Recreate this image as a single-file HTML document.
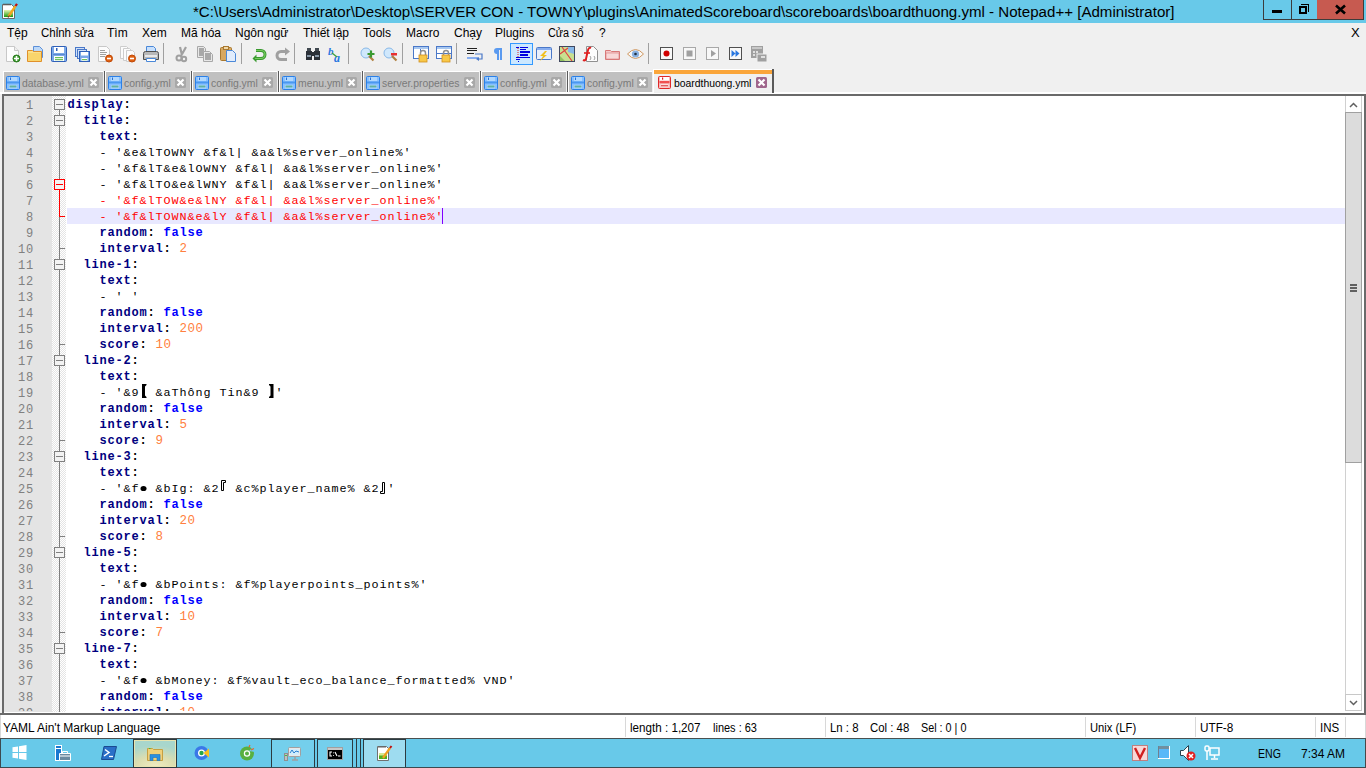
<!DOCTYPE html>
<html><head><meta charset="utf-8"><style>
*{margin:0;padding:0;box-sizing:border-box}
html,body{width:1366px;height:768px;overflow:hidden;background:#f0f0f0;position:relative;font-family:"Liberation Sans",sans-serif}
.a{position:absolute}
svg.a{overflow:visible}
#title{left:0;top:0;width:1366px;height:23px;background:#68c9e9}
#ttext{left:193px;top:2px;font-size:15.1px;line-height:20px;color:#000;white-space:nowrap}
#menu{left:0;top:23px;width:1366px;height:20px;font-size:12px;line-height:20px;color:#000}
#menu span{position:absolute;top:0;white-space:nowrap}
#gutter{left:4px;top:96px;width:48px;height:616px;background:#e4e4e4}
#fold{left:52px;top:96px;width:14px;height:616px;background-color:#fff;background-image:linear-gradient(45deg,#e4e4e4 25%,transparent 25%,transparent 75%,#e4e4e4 75%),linear-gradient(45deg,#e4e4e4 25%,transparent 25%,transparent 75%,#e4e4e4 75%);background-size:2px 2px;background-position:0 0,1px 1px}
#code{left:0;top:0;width:1345px;height:711px;overflow:hidden}
.ln{position:absolute;left:67px;height:16px;padding-top:1px;padding-left:0.5px;line-height:16px;font-family:"Liberation Mono",monospace;font-size:13.333px;white-space:pre;color:#000}
.num{position:absolute;left:4px;width:30px;text-align:right;height:16px;padding-top:2px;line-height:16px;font-family:"Liberation Mono",monospace;font-size:12px;letter-spacing:0.8px;color:#808080}
.t,.r{font-size:11.75px;letter-spacing:0.95px}
.n{font-size:12.5px;letter-spacing:0.5px}
.k,.b,.p{font-size:12px;letter-spacing:0.8px;font-weight:bold}
.k{color:#000080;font-weight:bold}
.b{color:#0000ff;font-weight:bold}
.n{color:#ff8040}
.r{color:#ff0000}
.cjs{display:inline-block;vertical-align:top;margin-top:-1px}
.fbox{position:absolute;left:54px;width:11px;height:11px;border:1px solid #808080;background:#f3f3f3}
.fbox:after{content:"";position:absolute;left:1px;top:4px;width:7px;height:1px;background:#808080}
.fbox.red{border-color:#ff0000}
.fbox.red:after{background:#ff0000}
#curline{left:67px;top:208px;width:1278px;height:16px;background:#e8e8ff}
#status{left:0;top:715px;width:1366px;height:23px;background:#fff;font-size:12px;line-height:22px;box-shadow:inset 1px 0 0 #d8d8d8,inset -1px 0 0 #d8d8d8}
#status span{position:absolute;top:2px;white-space:nowrap}
#status i{position:absolute;top:2px;width:1px;height:20px;background:#d8d8d8}
#task{left:0;top:738px;width:1366px;height:30px;background:#68c9e9;border-top:1px solid #4a5050}
.tab{position:absolute;top:71px;height:21px;background:#c0c0c0;border-top:1px solid #fff;border-left:1px solid #fff;font-size:10.4px;line-height:20px;color:#6d6d6d;white-space:nowrap}
.tab b{position:absolute;right:-2px;top:-1px;width:1px;height:21px;background:#5a5a5a;box-shadow:1px 0 0 #a0a0a0}
</style></head><body>
<div id="title" class="a"></div>
<svg class="a" style="left:2px;top:3px" width="16" height="17" viewBox="0 0 16 17" >
<defs><linearGradient id="gg" x1="0" y1="0" x2="0" y2="1"><stop offset="0" stop-color="#e8f4b0"/><stop offset="1" stop-color="#1a9a10"/></linearGradient></defs>
<path d="M0.5 1.5h9l3 3v11h-12z" fill="#fff" stroke="#6a6a6a"/>
<path d="M2 0.5v2M4 0.5v2M6 0.5v2M8 0.5v2" stroke="#505050"/>
<rect x="2" y="7" width="9" height="7" fill="url(#gg)"/>
<path d="M6.5 13.5l7-10.5" stroke="#f0a820" stroke-width="2.4"/><path d="M6 14.5l1.5-2" stroke="#604020" stroke-width="1.2"/>
<path d="M13.5 3l1.5-2.2" stroke="#c01010" stroke-width="2.2"/></svg>
<div id="ttext" class="a">*C:\Users\Administrator\Desktop\SERVER CON - TOWNY\plugins\AnimatedScoreboard\scoreboards\boardthuong.yml - Notepad++ [Administrator]</div>

<div class="a" style="left:1263px;top:0;width:101px;height:20px;border:1px solid #3c3c3c;border-top:none;background:#68c9e9"></div>
<div class="a" style="left:1291px;top:0;width:1px;height:20px;background:#3c3c3c"></div>
<div class="a" style="left:1317px;top:0;width:46px;height:19px;background:#c75a50"></div>
<div class="a" style="left:1272px;top:10px;width:10px;height:3px;background:#000"></div>
<div class="a" style="left:1301px;top:4px;width:8px;height:8px;border-top:1px solid #000;border-right:1px solid #000"></div>
<div class="a" style="left:1299px;top:6px;width:8px;height:8px;border:2px solid #000"></div>
<svg class="a" style="left:1335px;top:5px" width="11" height="9" viewBox="0 0 11 9" ><path d="M1 0.5l9 8M10 0.5l-9 8" stroke="#000" stroke-width="2.6"/></svg>
<div id="menu" class="a"><span style="left:7px">Tệp</span><span style="left:41px"><span style="display:inline-block;transform:scaleX(0.955);transform-origin:0 0">Chỉnh sửa</span></span><span style="left:107px">Tìm</span><span style="left:142px">Xem</span><span style="left:181px">Mã hóa</span><span style="left:235px">Ngôn ngữ</span><span style="left:303px">Thiết lập</span><span style="left:363px">Tools</span><span style="left:406px">Macro</span><span style="left:454px">Chạy</span><span style="left:495px">Plugins</span><span style="left:548px"><span style="display:inline-block;transform:scaleX(0.9);transform-origin:0 0">Cửa sổ</span></span><span style="left:599px">?</span><span style="left:1351px;font-size:13px">X</span></div>
<svg class="a" style="left:5px;top:46px" width="16" height="16" viewBox="0 0 16 16" >
<path d="M1.5 0.5h8l4 4v11h-12z" fill="#fdfdfd" stroke="#c8c8c8"/>
<path d="M9.5 0.5v4h4" fill="#eee" stroke="#c8c8c8"/>
<circle cx="11.5" cy="12.5" r="3.5" fill="#3a9a2a" stroke="#2a7a1e"/>
<path d="M11.5 10v5M9 12.5h5" stroke="#fff" stroke-width="1.6"/></svg><svg class="a" style="left:27px;top:46px" width="17" height="16" viewBox="0 0 17 16" >
<path d="M6.5 0.5h6l3 3v8h-9z" fill="#bcd8f8" stroke="#5b8fd8"/>
<path d="M0.5 4.5h5l1 1h8v10h-14z" fill="#fbe08a" stroke="#e0902a"/>
<path d="M1 7h13v8H1z" fill="#f8d060" opacity=".7"/></svg><svg class="a" style="left:51px;top:46px" width="16" height="16" viewBox="0 0 16 16" >
<rect x="0.5" y="0.5" width="15" height="15" rx="1" fill="#7aa8e8" stroke="#3060b8"/>
<rect x="3" y="1" width="10" height="6" fill="#fff"/>
<rect x="5" y="2" width="1.5" height="3" fill="#3060b8"/>
<rect x="2" y="8" width="12" height="1" fill="#5a88d0"/>
<rect x="3" y="10" width="10" height="5" fill="#fff"/>
<rect x="4" y="11" width="8" height="1.2" fill="#6cc05c"/><rect x="4" y="13" width="8" height="1.2" fill="#6cc05c"/></svg><svg class="a" style="left:75px;top:47px" width="15" height="15" viewBox="0 0 15 15" >
<rect x="0.5" y="0.5" width="9" height="9" fill="#cfe0f8" stroke="#4a78c8"/>
<rect x="2.5" y="2.5" width="9" height="9" fill="#cfe0f8" stroke="#4a78c8"/>
<rect x="4.5" y="4.5" width="10" height="10" fill="#7aa8e8" stroke="#3060b8"/>
<rect x="6" y="5" width="7" height="3.5" fill="#fff"/>
<rect x="6.5" y="11" width="6" height="3" fill="#fff"/><rect x="7" y="12" width="5" height="1.2" fill="#6cc05c"/></svg><svg class="a" style="left:98px;top:46px" width="15" height="16" viewBox="0 0 15 16" >
<path d="M0.5 0.5h8l3 3v12h-11z" fill="#fcfcfc" stroke="#c8c8c8"/>
<path d="M2 4.5h5M2 6.5h7M2 8.5h6M2 10.5h5" fill="none" stroke="#a0a0a0"/>
<circle cx="11" cy="12.5" r="3.5" fill="#e06010" stroke="#c04a08"/>
<path d="M9 12.5h4" stroke="#fff" stroke-width="1.6"/></svg><svg class="a" style="left:120px;top:46px" width="16" height="16" viewBox="0 0 16 16" >
<path d="M0.5 0.5h6l2 2v10h-8z" fill="#fcfcfc" stroke="#cdcdcd"/>
<path d="M3.5 2.5h6l2 2v10h-8z" fill="#fcfcfc" stroke="#cdcdcd"/>
<path d="M6.5 4.5h6l2 2v9h-8z" fill="#fcfcfc" stroke="#cdcdcd"/>
<circle cx="12" cy="12.5" r="3.5" fill="#e06010" stroke="#c04a08"/>
<path d="M10 12.5h4" stroke="#fff" stroke-width="1.6"/></svg><svg class="a" style="left:143px;top:46px" width="16" height="16" viewBox="0 0 16 16" >
<path d="M3.5 0.5h7l2 2v6h-9z" fill="#c8e0fc" stroke="#4a88d8"/>
<path d="M0.5 7.5q0-2 2-2h11q2 0 2 2v6h-15z" fill="#b8b8b8" stroke="#505050"/>
<rect x="2" y="9" width="12" height="2" fill="#e8e8e8"/>
<path d="M3.5 12.5h9v3h-9z" fill="#fff" stroke="#4a88d8"/></svg><div class="a" style="left:163px;top:43px;width:1px;height:21px;background:#a0a0a0"></div><svg class="a" style="left:175px;top:46px" width="14" height="16" viewBox="0 0 14 16" >
<path d="M5 1l2 8M11 1l-5 9" stroke="#a0a0a0" stroke-width="2.2"/>
<circle cx="4" cy="12" r="2.5" fill="none" stroke="#a0a0a0" stroke-width="2"/>
<circle cx="9" cy="13" r="2.2" fill="none" stroke="#a0a0a0" stroke-width="2"/></svg><svg class="a" style="left:197px;top:46px" width="16" height="16" viewBox="0 0 16 16" >
<path d="M0.5 0.5h6l2 2v9h-8z" fill="#e8e8e8" stroke="#a8a8a8"/>
<rect x="2" y="2" width="5" height="8" fill="#a8a8a8"/>
<path d="M6.5 5.5h6l3 3v7h-9z" fill="#e8e8e8" stroke="#a8a8a8"/>
<rect x="8" y="7" width="6" height="7" fill="#a8a8a8"/></svg><svg class="a" style="left:220px;top:46px" width="17" height="16" viewBox="0 0 17 16" >
<rect x="0.5" y="1.5" width="11" height="13" rx="1" fill="#d8a860" stroke="#a87830"/>
<rect x="3.5" y="0.5" width="5" height="3" fill="#f0d8a8" stroke="#a87830"/>
<path d="M6.5 4.5h6l3 3v8h-9z" fill="#e0ecfc" stroke="#4a88d8"/></svg><div class="a" style="left:241px;top:43px;width:1px;height:21px;background:#a0a0a0"></div><svg class="a" style="left:252px;top:47px" width="15" height="15" viewBox="0 0 15 15" >
<path d="M4 3.5h5a4 4 0 0 1 0 8h-6" fill="none" stroke="#3a9a30" stroke-width="3"/>
<path d="M4.5 7.5l-4 4 4 4z" fill="#3a9a30"/>
<path d="M4 3.5h5a4 4 0 0 1 0 8h-6" fill="none" stroke="#78cc60" stroke-width="1.2"/></svg><svg class="a" style="left:275px;top:47px" width="15" height="15" viewBox="0 0 15 15" >
<path d="M11 4.5h-5a4 4 0 0 0 0 8h6" fill="none" stroke="#a0a0a0" stroke-width="3"/>
<path d="M10 0.5l5 4-5 4z" fill="#a0a0a0"/></svg><div class="a" style="left:294px;top:43px;width:1px;height:21px;background:#a0a0a0"></div><svg class="a" style="left:306px;top:48px" width="14" height="13" viewBox="0 0 14 13" >
<rect x="1" y="0" width="4" height="3" fill="#404850"/><rect x="9" y="0" width="4" height="3" fill="#404850"/>
<rect x="0" y="3" width="6" height="9" fill="#2a3038"/><rect x="8" y="3" width="6" height="9" fill="#2a3038"/>
<rect x="5" y="4" width="4" height="4" fill="#2a3038"/>
<rect x="1" y="7" width="4" height="2" fill="#8898a8"/><rect x="9" y="7" width="4" height="2" fill="#8898a8"/></svg><svg class="a" style="left:328px;top:46px" width="17" height="16" viewBox="0 0 17 16" >
<text x="0" y="9" font-family="Liberation Serif" font-style="italic" font-weight="bold" font-size="11" fill="#2a78e0">b</text>
<text x="6" y="15.5" font-family="Liberation Serif" font-style="italic" font-weight="bold" font-size="12" fill="#2a78e0">a</text>
<path d="M4 7l5 4" stroke="#40a040" stroke-width="1.5"/></svg><div class="a" style="left:348px;top:43px;width:1px;height:21px;background:#a0a0a0"></div><svg class="a" style="left:360px;top:47px" width="15" height="14" viewBox="0 0 15 14" >
<circle cx="6" cy="6" r="5" fill="#d0e8fc" stroke="#88b8e8"/>
<path d="M9 9l4.5 4.5" stroke="#b08040" stroke-width="2.2"/><path d="M11 3.5v7M7.5 7h7" stroke="#3a9a30" stroke-width="2.2"/></svg><svg class="a" style="left:383px;top:47px" width="15" height="14" viewBox="0 0 15 14" >
<circle cx="6" cy="6" r="5" fill="#d0e8fc" stroke="#88b8e8"/>
<path d="M9 9l4.5 4.5" stroke="#b08040" stroke-width="2.2"/><rect x="8" y="6" width="6" height="2.5" fill="#e83030"/></svg><div class="a" style="left:402px;top:43px;width:1px;height:21px;background:#a0a0a0"></div><svg class="a" style="left:413px;top:46px" width="17" height="16" viewBox="0 0 17 16" >
<rect x="0.5" y="0.5" width="15" height="12" fill="#fff" stroke="#4a78c8"/>
<rect x="1" y="1" width="14" height="2" fill="#a8c8f0"/><path d="M7.5 3v10" stroke="#4a78c8"/>
<path d="M7.5 9v-2a2.5 2.5 0 0 1 5 0v2" fill="none" stroke="#909090" stroke-width="1.5"/>
<rect x="6" y="9" width="8" height="7" fill="#f8c848" stroke="#d09020" stroke-width=".8"/></svg><svg class="a" style="left:436px;top:46px" width="17" height="16" viewBox="0 0 17 16" >
<rect x="0.5" y="0.5" width="15" height="12" fill="#fff" stroke="#4a78c8"/>
<rect x="1" y="1" width="14" height="2" fill="#a8c8f0"/><path d="M1 7.5h14" stroke="#4a78c8"/>
<path d="M7.5 9v-2a2.5 2.5 0 0 1 5 0v2" fill="none" stroke="#909090" stroke-width="1.5"/>
<rect x="6" y="9" width="8" height="7" fill="#f8c848" stroke="#d09020" stroke-width=".8"/></svg><div class="a" style="left:456px;top:43px;width:1px;height:21px;background:#a0a0a0"></div><svg class="a" style="left:467px;top:48px" width="17" height="13" viewBox="0 0 17 13" >
<rect x="0" y="0" width="10" height="1" fill="#202020"/><rect x="0" y="2" width="10" height="1" fill="#202020"/>
<rect x="0" y="5" width="7" height="1" fill="#202020"/>
<rect x="0" y="9" width="11" height="2" fill="#88aef0"/>
<path d="M8 6h7v5h-4" fill="none" stroke="#4a78c8" stroke-width="1.2"/>
<path d="M12 9l-3 2 3 2z" fill="#4a78c8"/></svg><svg class="a" style="left:493px;top:48px" width="9" height="12" viewBox="0 0 9 12" >
<path d="M4 0h5v12h-2v-10h-1v10h-2v-6a3 3 0 0 1 0-6z" fill="#5a9af0"/></svg><svg class="a" style="left:510px;top:43px" width="24" height="22" viewBox="0 0 24 22" >
<rect x="0.5" y="0.5" width="22" height="21" fill="#cce8ff" stroke="#3399ff"/>
<rect x="6" y="4" width="3" height="1" fill="#0000e0"/><rect x="10" y="4" width="8" height="1" fill="#0000e0"/>
<rect x="10" y="6" width="6" height="1" fill="#0000e0"/>
<rect x="10" y="8" width="10" height="2" fill="#0000e0"/>
<rect x="10" y="11" width="8" height="2" fill="#0000e0"/>
<rect x="6" y="14" width="14" height="1" fill="#0000e0"/>
<rect x="6" y="16" width="4" height="1" fill="#0000e0"/>
<rect x="8" y="18" width="1" height="1" fill="#0000e0"/>
<path d="M8 5v9" stroke="#e02020" stroke-dasharray="1 1"/></svg><svg class="a" style="left:536px;top:47px" width="16" height="14" viewBox="0 0 16 14" >
<rect x="0.5" y="0.5" width="15" height="12" rx="1" fill="#e8f0fc" stroke="#4a78c8"/>
<rect x="1" y="1" width="14" height="2" fill="#88aef0"/>
<path d="M9 4l-5 5h3l-3 5 7-6h-3l3-4z" fill="#f0c020"/></svg><svg class="a" style="left:559px;top:46px" width="16" height="16" viewBox="0 0 16 16" >
<rect x="0.5" y="0.5" width="15" height="15" fill="#c8e090" stroke="#404860"/>
<path d="M9 1h6v7l-6-2z" fill="#88b8e8"/><path d="M1 10l5 5H1z" fill="#90c060"/>
<path d="M3 1l10 14M1 8l8-6" stroke="#e04040" stroke-width="1.2"/></svg><svg class="a" style="left:582px;top:46px" width="16" height="16" viewBox="0 0 16 16" >
<path d="M4.5 0.5h7l4 4v11h-11z" fill="#fcfcfc" stroke="#909090"/>
<path d="M8 10l1 2M8 14l1-2" stroke="#a0a0a0"/><path d="M12 10l1 2M12 14l1-2" stroke="#a0a0a0"/>
<path d="M9 2q-2-1-3 2l-2 9q-1 2-3 1" fill="none" stroke="#e02020" stroke-width="2"/>
<path d="M2 7h6" stroke="#e02020" stroke-width="1.6"/></svg><svg class="a" style="left:605px;top:49px" width="15" height="11" viewBox="0 0 15 11" >
<path d="M0.5 1.5h5l1 1h8v8h-14z" fill="#f4c8c8" stroke="#d87878"/>
<path d="M1 4h13v6H1z" fill="#f8d8d8" stroke="#d87878" stroke-width=".6"/></svg><svg class="a" style="left:627px;top:48px" width="17" height="12" viewBox="0 0 17 12" >
<path d="M0.5 6q8-9 16 0q-8 9-16 0z" fill="#f8f8f8" stroke="#d09860"/>
<circle cx="8.5" cy="6" r="3.6" fill="#88b0e0"/><circle cx="8.5" cy="6" r="1.3" fill="#203040"/></svg><div class="a" style="left:648px;top:43px;width:1px;height:21px;background:#a0a0a0"></div><svg class="a" style="left:660px;top:47px" width="13" height="13" viewBox="0 0 13 13" ><rect x="0.5" y="0.5" width="12" height="12" fill="#f8f8f8" stroke="#505050"/><circle cx="6.5" cy="6.5" r="3" fill="#d00000"/></svg><svg class="a" style="left:683px;top:47px" width="13" height="13" viewBox="0 0 13 13" ><rect x="0.5" y="0.5" width="12" height="12" fill="#f8f8f8" stroke="#a8a8a8"/><rect x="3.5" y="3.5" width="6" height="6" fill="#a0a0a0"/></svg><svg class="a" style="left:706px;top:47px" width="13" height="13" viewBox="0 0 13 13" ><rect x="0.5" y="0.5" width="12" height="12" fill="#f8f8f8" stroke="#a8a8a8"/><path d="M5 3l5 3.5-5 3.5z" fill="#a0a0a0"/></svg><svg class="a" style="left:729px;top:47px" width="13" height="13" viewBox="0 0 13 13" ><rect x="0.5" y="0.5" width="12" height="12" fill="#f8f8f8" stroke="#505050"/><path d="M2.5 3l4 3.5-4 3.5zM6.5 3l4 3.5-4 3.5z" fill="#2a78e0"/></svg><svg class="a" style="left:751px;top:46px" width="16" height="16" viewBox="0 0 16 16" >
<rect x="0" y="0" width="12" height="12" fill="#a0a0a0"/><rect x="1" y="1" width="10" height="2" fill="#c8c8c8"/>
<rect x="2" y="5" width="2" height="2" fill="#e0e0e0"/><rect x="5" y="5" width="2" height="2" fill="#e0e0e0"/><rect x="2" y="8" width="2" height="2" fill="#e0e0e0"/>
<rect x="6" y="8" width="10" height="8" fill="#a0a0a0" stroke="#f0f0f0"/><rect x="10" y="10" width="4" height="2" fill="#e0e0e0"/></svg>

<div class="a" style="left:2px;top:94px;width:1364px;height:2px;background:#6a6a6a"></div>
<div class="a" style="left:2px;top:94px;width:2px;height:619px;background:#6a6a6a"></div>
<div class="a" style="left:1364px;top:94px;width:2px;height:621px;background:#6a6a6a"></div>
<div class="a" style="left:4px;top:96px;width:1360px;height:617px;background:#fff"></div>
<div class="a" style="left:0;top:713px;width:1366px;height:2px;background:#6a6a6a"></div>
<div class="a" style="left:0;top:92px;width:1366px;height:2px;background:#fff"></div>

<div id="tabs"><div class="tab" style="left:3px;width:100px"><b></b></div><svg class="a" style="left:6px;top:76px" width="14" height="14" viewBox="0 0 14 14" >
<rect x="0.5" y="0.5" width="13" height="13" rx="1" fill="#88c0ff" stroke="#2a80e8"/>
<rect x="3" y="1" width="8" height="4" fill="#b0d8ff"/><rect x="4" y="1.5" width="1" height="2.5" fill="#2a70d0"/>
<rect x="1" y="5.5" width="12" height="2" fill="#4a98f0"/>
<rect x="3" y="9" width="8" height="3.5" fill="#b0d8ff"/><rect x="3.5" y="9.5" width="7" height="2" fill="#60b0a0"/></svg><div class="a" style="left:22px;top:74px;font-size:10.4px;line-height:20px;color:#7a7a7a;white-space:nowrap">database.yml</div><svg class="a" style="left:88px;top:77px" width="11" height="11" viewBox="0 0 11 11" >
<rect x="0" y="0" width="11" height="11" rx="1.5" fill="#a8a8a8"/>
<path d="M2.5 2.5l6 6M8.5 2.5l-6 6" stroke="#fff" stroke-width="2.2"/></svg><div class="tab" style="left:105px;width:85px"><b></b></div><svg class="a" style="left:108px;top:76px" width="14" height="14" viewBox="0 0 14 14" >
<rect x="0.5" y="0.5" width="13" height="13" rx="1" fill="#88c0ff" stroke="#2a80e8"/>
<rect x="3" y="1" width="8" height="4" fill="#b0d8ff"/><rect x="4" y="1.5" width="1" height="2.5" fill="#2a70d0"/>
<rect x="1" y="5.5" width="12" height="2" fill="#4a98f0"/>
<rect x="3" y="9" width="8" height="3.5" fill="#b0d8ff"/><rect x="3.5" y="9.5" width="7" height="2" fill="#60b0a0"/></svg><div class="a" style="left:124px;top:74px;font-size:10.4px;line-height:20px;color:#7a7a7a;white-space:nowrap">config.yml</div><svg class="a" style="left:175px;top:77px" width="11" height="11" viewBox="0 0 11 11" >
<rect x="0" y="0" width="11" height="11" rx="1.5" fill="#a8a8a8"/>
<path d="M2.5 2.5l6 6M8.5 2.5l-6 6" stroke="#fff" stroke-width="2.2"/></svg><div class="tab" style="left:192px;width:85px"><b></b></div><svg class="a" style="left:195px;top:76px" width="14" height="14" viewBox="0 0 14 14" >
<rect x="0.5" y="0.5" width="13" height="13" rx="1" fill="#88c0ff" stroke="#2a80e8"/>
<rect x="3" y="1" width="8" height="4" fill="#b0d8ff"/><rect x="4" y="1.5" width="1" height="2.5" fill="#2a70d0"/>
<rect x="1" y="5.5" width="12" height="2" fill="#4a98f0"/>
<rect x="3" y="9" width="8" height="3.5" fill="#b0d8ff"/><rect x="3.5" y="9.5" width="7" height="2" fill="#60b0a0"/></svg><div class="a" style="left:211px;top:74px;font-size:10.4px;line-height:20px;color:#7a7a7a;white-space:nowrap">config.yml</div><svg class="a" style="left:262px;top:77px" width="11" height="11" viewBox="0 0 11 11" >
<rect x="0" y="0" width="11" height="11" rx="1.5" fill="#a8a8a8"/>
<path d="M2.5 2.5l6 6M8.5 2.5l-6 6" stroke="#fff" stroke-width="2.2"/></svg><div class="tab" style="left:279px;width:82px"><b></b></div><svg class="a" style="left:282px;top:76px" width="14" height="14" viewBox="0 0 14 14" >
<rect x="0.5" y="0.5" width="13" height="13" rx="1" fill="#88c0ff" stroke="#2a80e8"/>
<rect x="3" y="1" width="8" height="4" fill="#b0d8ff"/><rect x="4" y="1.5" width="1" height="2.5" fill="#2a70d0"/>
<rect x="1" y="5.5" width="12" height="2" fill="#4a98f0"/>
<rect x="3" y="9" width="8" height="3.5" fill="#b0d8ff"/><rect x="3.5" y="9.5" width="7" height="2" fill="#60b0a0"/></svg><div class="a" style="left:298px;top:74px;font-size:10.4px;line-height:20px;color:#7a7a7a;white-space:nowrap">menu.yml</div><svg class="a" style="left:346px;top:77px" width="11" height="11" viewBox="0 0 11 11" >
<rect x="0" y="0" width="11" height="11" rx="1.5" fill="#a8a8a8"/>
<path d="M2.5 2.5l6 6M8.5 2.5l-6 6" stroke="#fff" stroke-width="2.2"/></svg><div class="tab" style="left:363px;width:116px"><b></b></div><svg class="a" style="left:366px;top:76px" width="14" height="14" viewBox="0 0 14 14" >
<rect x="0.5" y="0.5" width="13" height="13" rx="1" fill="#88c0ff" stroke="#2a80e8"/>
<rect x="3" y="1" width="8" height="4" fill="#b0d8ff"/><rect x="4" y="1.5" width="1" height="2.5" fill="#2a70d0"/>
<rect x="1" y="5.5" width="12" height="2" fill="#4a98f0"/>
<rect x="3" y="9" width="8" height="3.5" fill="#b0d8ff"/><rect x="3.5" y="9.5" width="7" height="2" fill="#60b0a0"/></svg><div class="a" style="left:382px;top:74px;font-size:10.4px;line-height:20px;color:#7a7a7a;white-space:nowrap">server.properties</div><svg class="a" style="left:464px;top:77px" width="11" height="11" viewBox="0 0 11 11" >
<rect x="0" y="0" width="11" height="11" rx="1.5" fill="#a8a8a8"/>
<path d="M2.5 2.5l6 6M8.5 2.5l-6 6" stroke="#fff" stroke-width="2.2"/></svg><div class="tab" style="left:481px;width:85px"><b></b></div><svg class="a" style="left:484px;top:76px" width="14" height="14" viewBox="0 0 14 14" >
<rect x="0.5" y="0.5" width="13" height="13" rx="1" fill="#88c0ff" stroke="#2a80e8"/>
<rect x="3" y="1" width="8" height="4" fill="#b0d8ff"/><rect x="4" y="1.5" width="1" height="2.5" fill="#2a70d0"/>
<rect x="1" y="5.5" width="12" height="2" fill="#4a98f0"/>
<rect x="3" y="9" width="8" height="3.5" fill="#b0d8ff"/><rect x="3.5" y="9.5" width="7" height="2" fill="#60b0a0"/></svg><div class="a" style="left:500px;top:74px;font-size:10.4px;line-height:20px;color:#7a7a7a;white-space:nowrap">config.yml</div><svg class="a" style="left:551px;top:77px" width="11" height="11" viewBox="0 0 11 11" >
<rect x="0" y="0" width="11" height="11" rx="1.5" fill="#a8a8a8"/>
<path d="M2.5 2.5l6 6M8.5 2.5l-6 6" stroke="#fff" stroke-width="2.2"/></svg><div class="tab" style="left:568px;width:84px"><b></b></div><svg class="a" style="left:571px;top:76px" width="14" height="14" viewBox="0 0 14 14" >
<rect x="0.5" y="0.5" width="13" height="13" rx="1" fill="#88c0ff" stroke="#2a80e8"/>
<rect x="3" y="1" width="8" height="4" fill="#b0d8ff"/><rect x="4" y="1.5" width="1" height="2.5" fill="#2a70d0"/>
<rect x="1" y="5.5" width="12" height="2" fill="#4a98f0"/>
<rect x="3" y="9" width="8" height="3.5" fill="#b0d8ff"/><rect x="3.5" y="9.5" width="7" height="2" fill="#60b0a0"/></svg><div class="a" style="left:587px;top:74px;font-size:10.4px;line-height:20px;color:#7a7a7a;white-space:nowrap">config.yml</div><svg class="a" style="left:637px;top:77px" width="11" height="11" viewBox="0 0 11 11" >
<rect x="0" y="0" width="11" height="11" rx="1.5" fill="#a8a8a8"/>
<path d="M2.5 2.5l6 6M8.5 2.5l-6 6" stroke="#fff" stroke-width="2.2"/></svg><div class="a" style="left:653px;top:69px;width:119px;height:24px;background:#f0f0f0;border-top:1px solid #fff;border-left:1px solid #fff"></div><div class="a" style="left:654px;top:70px;width:118px;height:4px;background:#faa53a"></div><div class="a" style="left:772px;top:69px;width:2px;height:24px;background:#5a5a5a"></div><svg class="a" style="left:658px;top:76px" width="13" height="13" viewBox="0 0 13 13" >
<rect x="0.5" y="0.5" width="12" height="12" rx="1" fill="#f8b8b8" stroke="#e02828"/>
<rect x="2" y="1" width="9" height="3.5" fill="#fff"/><rect x="4" y="1.5" width="1.2" height="2.2" fill="#e02020"/>
<rect x="1.5" y="5" width="10" height="2.2" fill="#f05050"/>
<rect x="2.5" y="8" width="8" height="3.5" fill="#fce0e0"/><rect x="3" y="9" width="7" height="1.4" fill="#e06060"/></svg><div class="a" style="left:674px;top:74px;font-size:10.4px;line-height:20px;color:#000;white-space:nowrap">boardthuong.yml</div><svg class="a" style="left:756px;top:77px" width="11" height="11" viewBox="0 0 11 11" >
<rect x="0" y="0" width="11" height="11" rx="1.5" fill="#a0668c"/>
<path d="M2.5 2.5l6 6M8.5 2.5l-6 6" stroke="#fff" stroke-width="2.2"/></svg></div>
<div id="gutter" class="a"></div>
<div id="fold" class="a"></div>
<div id="curline" class="a"></div>
<div class="a" style="left:442px;top:208px;width:1px;height:16px;background:#8000ff;z-index:5"></div>
<div id="code" class="a"><div class="num" style="top:96px">1</div><div class="num" style="top:112px">2</div><div class="num" style="top:128px">3</div><div class="num" style="top:144px">4</div><div class="num" style="top:160px">5</div><div class="num" style="top:176px">6</div><div class="num" style="top:192px">7</div><div class="num" style="top:208px">8</div><div class="num" style="top:224px">9</div><div class="num" style="top:240px">10</div><div class="num" style="top:256px">11</div><div class="num" style="top:272px">12</div><div class="num" style="top:288px">13</div><div class="num" style="top:304px">14</div><div class="num" style="top:320px">15</div><div class="num" style="top:336px">16</div><div class="num" style="top:352px">17</div><div class="num" style="top:368px">18</div><div class="num" style="top:384px">19</div><div class="num" style="top:400px">20</div><div class="num" style="top:416px">21</div><div class="num" style="top:432px">22</div><div class="num" style="top:448px">23</div><div class="num" style="top:464px">24</div><div class="num" style="top:480px">25</div><div class="num" style="top:496px">26</div><div class="num" style="top:512px">27</div><div class="num" style="top:528px">28</div><div class="num" style="top:544px">29</div><div class="num" style="top:560px">30</div><div class="num" style="top:576px">31</div><div class="num" style="top:592px">32</div><div class="num" style="top:608px">33</div><div class="num" style="top:624px">34</div><div class="num" style="top:640px">35</div><div class="num" style="top:656px">36</div><div class="num" style="top:672px">37</div><div class="num" style="top:688px">38</div><div class="num" style="top:704px">39</div><div class="ln" style="top:96px"><span class="k">display</span><span class="p">:</span></div><div class="ln" style="top:112px"><span class="t">  </span><span class="k">title</span><span class="p">:</span></div><div class="ln" style="top:128px"><span class="t">    </span><span class="k">text</span><span class="p">:</span></div><div class="ln" style="top:144px"><span class="t">    - '&amp;e&amp;lTOWNY &amp;f&amp;l| &amp;a&amp;l%server_online%'</span></div><div class="ln" style="top:160px"><span class="t">    - '&amp;f&amp;lT&amp;e&amp;lOWNY &amp;f&amp;l| &amp;a&amp;l%server_online%'</span></div><div class="ln" style="top:176px"><span class="t">    - '&amp;f&amp;lTO&amp;e&amp;lWNY &amp;f&amp;l| &amp;a&amp;l%server_online%'</span></div><div class="ln" style="top:192px"><span class="r">    - '&amp;f&amp;lTOW&amp;e&amp;lNY &amp;f&amp;l| &amp;a&amp;l%server_online%'</span></div><div class="ln" style="top:208px"><span class="r">    - '&amp;f&amp;lTOWN&amp;e&amp;lY &amp;f&amp;l| &amp;a&amp;l%server_online%'</span></div><div class="ln" style="top:224px"><span class="t">    </span><span class="k">random</span><span class="p">: </span><span class="b">false</span></div><div class="ln" style="top:240px"><span class="t">    </span><span class="k">interval</span><span class="p">: </span><span class="n">2</span></div><div class="ln" style="top:256px"><span class="t">  </span><span class="k">line-1</span><span class="p">:</span></div><div class="ln" style="top:272px"><span class="t">    </span><span class="k">text</span><span class="p">:</span></div><div class="ln" style="top:288px"><span class="t">    - ' '</span></div><div class="ln" style="top:304px"><span class="t">    </span><span class="k">random</span><span class="p">: </span><span class="b">false</span></div><div class="ln" style="top:320px"><span class="t">    </span><span class="k">interval</span><span class="p">: </span><span class="n">200</span></div><div class="ln" style="top:336px"><span class="t">    </span><span class="k">score</span><span class="p">: </span><span class="n">10</span></div><div class="ln" style="top:352px"><span class="t">  </span><span class="k">line-2</span><span class="p">:</span></div><div class="ln" style="top:368px"><span class="t">    </span><span class="k">text</span><span class="p">:</span></div><div class="ln" style="top:384px"><span class="t">    - '&amp;9</span><svg class="cjs" width="8" height="16" viewBox="0 0 8 16"><path d="M2 0H6.5V1L5 2.5V11.5L6.5 13V14H2z" fill="#000"/></svg><span class="t"> &amp;aThông Tin&amp;9 </span><svg class="cjs" width="8" height="16" viewBox="0 0 8 16"><path d="M5.5 0H1V1L2.5 2.5V11.5L1 13V14H5.5z" fill="#000"/></svg><span class="t">'</span></div><div class="ln" style="top:400px"><span class="t">    </span><span class="k">random</span><span class="p">: </span><span class="b">false</span></div><div class="ln" style="top:416px"><span class="t">    </span><span class="k">interval</span><span class="p">: </span><span class="n">5</span></div><div class="ln" style="top:432px"><span class="t">    </span><span class="k">score</span><span class="p">: </span><span class="n">9</span></div><div class="ln" style="top:448px"><span class="t">  </span><span class="k">line-3</span><span class="p">:</span></div><div class="ln" style="top:464px"><span class="t">    </span><span class="k">text</span><span class="p">:</span></div><div class="ln" style="top:480px"><span class="t">    - '&amp;f</span><svg class="cjs" width="8" height="16" viewBox="0 0 8 16"><ellipse cx="3.5" cy="8.5" rx="3" ry="2.6" fill="#000"/></svg><span class="t"> &amp;bIg: &amp;2</span><svg class="cjs" width="8" height="16" viewBox="0 0 8 16"><path d="M1.5 0.5H5.5V2.5H3.5V10.5H1.5Z" stroke="#000" fill="none"/></svg><span class="t"> &amp;c%player_name% &amp;2</span><svg class="cjs" width="8" height="16" viewBox="0 0 8 16"><path d="M4.5 13.5H0.5V11.5H2.5V2.5H4.5Z" stroke="#000" fill="none"/></svg><span class="t">'</span></div><div class="ln" style="top:496px"><span class="t">    </span><span class="k">random</span><span class="p">: </span><span class="b">false</span></div><div class="ln" style="top:512px"><span class="t">    </span><span class="k">interval</span><span class="p">: </span><span class="n">20</span></div><div class="ln" style="top:528px"><span class="t">    </span><span class="k">score</span><span class="p">: </span><span class="n">8</span></div><div class="ln" style="top:544px"><span class="t">  </span><span class="k">line-5</span><span class="p">:</span></div><div class="ln" style="top:560px"><span class="t">    </span><span class="k">text</span><span class="p">:</span></div><div class="ln" style="top:576px"><span class="t">    - '&amp;f</span><svg class="cjs" width="8" height="16" viewBox="0 0 8 16"><ellipse cx="3.5" cy="8.5" rx="3" ry="2.6" fill="#000"/></svg><span class="t"> &amp;bPoints: &amp;f%playerpoints_points%'</span></div><div class="ln" style="top:592px"><span class="t">    </span><span class="k">random</span><span class="p">: </span><span class="b">false</span></div><div class="ln" style="top:608px"><span class="t">    </span><span class="k">interval</span><span class="p">: </span><span class="n">10</span></div><div class="ln" style="top:624px"><span class="t">    </span><span class="k">score</span><span class="p">: </span><span class="n">7</span></div><div class="ln" style="top:640px"><span class="t">  </span><span class="k">line-7</span><span class="p">:</span></div><div class="ln" style="top:656px"><span class="t">    </span><span class="k">text</span><span class="p">:</span></div><div class="ln" style="top:672px"><span class="t">    - '&amp;f</span><svg class="cjs" width="8" height="16" viewBox="0 0 8 16"><ellipse cx="3.5" cy="8.5" rx="3" ry="2.6" fill="#000"/></svg><span class="t"> &amp;bMoney: &amp;f%vault_eco_balance_formatted% VND'</span></div><div class="ln" style="top:688px"><span class="t">    </span><span class="k">random</span><span class="p">: </span><span class="b">false</span></div><div class="ln" style="top:704px"><span class="t">    </span><span class="k">interval</span><span class="p">: </span><span class="n">10</span></div></div>
<div class="a" style="left:59px;top:110px;width:1px;height:602px;background:#808080"></div><div class="fbox" style="top:99px"></div><div class="fbox" style="top:115px"></div><div class="fbox" style="top:259px"></div><div class="fbox" style="top:355px"></div><div class="fbox" style="top:451px"></div><div class="fbox" style="top:547px"></div><div class="fbox" style="top:643px"></div><div class="a" style="left:59px;top:248px;width:6px;height:1px;background:#808080"></div><div class="a" style="left:59px;top:344px;width:6px;height:1px;background:#808080"></div><div class="a" style="left:59px;top:440px;width:6px;height:1px;background:#808080"></div><div class="a" style="left:59px;top:536px;width:6px;height:1px;background:#808080"></div><div class="a" style="left:59px;top:632px;width:6px;height:1px;background:#808080"></div><div class="a" style="left:59px;top:189px;width:1px;height:28px;background:#ff0000"></div><div class="fbox red" style="top:179px"></div><div class="a" style="left:59px;top:216px;width:6px;height:1px;background:#ff0000"></div>

<div class="a" style="left:1345px;top:96px;width:17px;height:615px;background:#fff;border-left:1px solid #d0d0d0;border-right:1px solid #d0d0d0"></div>
<div class="a" style="left:1345px;top:112px;width:17px;height:351px;background:#dcdcdc;border:1px solid #a0a0a0"></div>
<div class="a" style="left:1350px;top:284px;width:7px;height:2px;background:#606060"></div>
<div class="a" style="left:1350px;top:287px;width:7px;height:2px;background:#606060"></div>
<div class="a" style="left:1350px;top:290px;width:7px;height:2px;background:#606060"></div>
<div class="a" style="left:1345px;top:694px;width:17px;height:17px;border:1px solid #c8c8c8;background:#fff"></div>
<svg class="a" style="left:1349px;top:102px" width="9" height="6" viewBox="0 0 9 6" ><path d="M1 5l3.5-3.5L8 5" fill="none" stroke="#606060" stroke-width="1.5"/></svg><svg class="a" style="left:1349px;top:700px" width="9" height="6" viewBox="0 0 9 6" ><path d="M1 1l3.5 3.5L8 1" fill="none" stroke="#606060" stroke-width="1.5"/></svg>
<div id="status" class="a"><span style="left:3px">YAML Ain't Markup Language</span><i style="left:625px"></i><i style="left:825px"></i><i style="left:1085px"></i><i style="left:1195px"></i><i style="left:1315px"></i><i style="left:1345px"></i><span style="left:630px;transform:scaleX(0.97);transform-origin:0 0">length : 1,207</span><span style="left:713px;transform:scaleX(0.915);transform-origin:0 0">lines : 63</span><span style="left:830px;transform:scaleX(0.95);transform-origin:0 0">Ln : 8</span><span style="left:870px;transform:scaleX(0.95);transform-origin:0 0">Col : 48</span><span style="left:921px;transform:scaleX(0.9);transform-origin:0 0">Sel : 0 | 0</span><span style="left:1090px;transform:scaleX(0.935);transform-origin:0 0">Unix (LF)</span><span style="left:1200px;transform:scaleX(0.98);transform-origin:0 0">UTF-8</span><span style="left:1320px;transform:scaleX(0.96);transform-origin:0 0">INS</span></div>
<div id="task" class="a"></div>
<div class="a" style="left:0;top:739px;width:1px;height:29px;background:#3c4a50"></div>
<div class="a" style="left:0;top:767px;width:1366px;height:1px;background:#3c4a50"></div>
<div class="a" style="left:1365px;top:739px;width:1px;height:29px;background:#4a4848"></div>
<svg class="a" style="left:12px;top:745px" width="15" height="15" viewBox="0 0 15 15" >
<path d="M0.5 2.2L6 1.4v5.6H0.5zM7 1.2L14.5 0v7H7zM0.5 8H6v5.6L0.5 12.8zM7 8h7.5v7L7 13.8z" fill="#fff"/></svg>
<svg class="a" style="left:55px;top:745px" width="17" height="17" viewBox="0 0 17 17" >
<rect x="0.5" y="0.5" width="6" height="15" fill="#1a78d0" stroke="#fff"/>
<rect x="1" y="3" width="5" height="1" fill="#fff"/>
<path d="M4.5 8.5h11v7h-11z" fill="#6a8aa0" stroke="#fff"/>
<path d="M7.5 8.5v-2h5v2" fill="none" stroke="#fff"/><path d="M5 11h10" stroke="#fff"/></svg>
<svg class="a" style="left:101px;top:746px" width="16" height="14" viewBox="0 0 16 14" >
<path d="M3 0.5h12.5l-3 13H0.5z" fill="#2a70c8" stroke="#1a4a90"/>
<path d="M4 3.5l4 3-5 3.5" fill="none" stroke="#fff" stroke-width="1.5"/><path d="M8 10.5h4" stroke="#fff" stroke-width="1.3"/></svg>
<div class="a" style="left:133px;top:739px;width:44px;height:29px;border:1px solid #2c3a40;background:radial-gradient(ellipse 90% 80% at 50% 100%,#f2ecc0 0%,#dcdeb0 50%,#a8d6cc 100%)"></div>
<div class="a" style="left:134px;top:740px;width:42px;height:27px;border:1px solid #e8e4b0"></div>
<svg class="a" style="left:147px;top:747px" width="16" height="14" viewBox="0 0 16 14" >
<path d="M0.5 1.5h5l1 1h9v11h-15z" fill="#f0d078" stroke="#c8a040"/>
<rect x="2" y="1" width="1.5" height="1" fill="#40c040"/>
<path d="M3 13.5v-6h10v6h-3v-3h-4v3z" fill="#2a90e0" stroke="#1a70c0" stroke-width=".6"/></svg>
<svg class="a" style="left:194px;top:745px" width="15" height="16" viewBox="0 0 15 16" >
<circle cx="7.5" cy="8" r="7" fill="#3a78e8"/><circle cx="7.5" cy="8" r="3.5" fill="#fff"/>
<circle cx="7.5" cy="8" r="2.2" fill="#28a848"/><path d="M9.5 8L15 3.5V12.5z" fill="#f8c020"/></svg>
<svg class="a" style="left:239px;top:745px" width="16" height="16" viewBox="0 0 16 16" >
<circle cx="8" cy="8.5" r="7" fill="#58b040"/><circle cx="8" cy="8.5" r="3.2" fill="#fff"/><circle cx="8" cy="8.5" r="2" fill="#58b040"/>
<path d="M10 6L16 0V7z" fill="#68c9e9"/><path d="M10 2l1-2M12 5l3-1.5" stroke="#f06020" stroke-width="1.2"/></svg>
<div class="a" style="left:271px;top:739px;width:44px;height:28px;border:1px solid #2c3a40;border-bottom:none;background:#74cfec"></div>
<div class="a" style="left:317px;top:739px;width:36px;height:28px;border:1px solid #2c3a40;border-bottom:none;background:#74cfec"></div>
<div class="a" style="left:363px;top:739px;width:43px;height:28px;border:1px solid #2c3a40;border-bottom:none;background:#9edcf0"></div>
<div class="a" style="left:356px;top:739px;width:1px;height:28px;background:#2c3a40"></div>
<div class="a" style="left:360px;top:739px;width:1px;height:28px;background:#2c3a40"></div>
<svg class="a" style="left:284px;top:747px" width="17" height="14" viewBox="0 0 17 14" >
<rect x="4.5" y="0.5" width="12" height="9" rx="1" fill="#e8e8e8" stroke="#a0a0a0"/>
<rect x="6" y="2" width="9" height="6" fill="#d0ecfc"/>
<path d="M6 6l2-3 2 3 2-2 3 1" fill="none" stroke="#2a80d0"/>
<path d="M8 13h6M11 10v3" stroke="#a0a0a0" stroke-width="1.5"/>
<rect x="0.5" y="6.5" width="3" height="7" fill="#c0c0c0" stroke="#909090"/><rect x="1" y="8" width="2" height="1" fill="#40c040"/></svg>
<svg class="a" style="left:327px;top:747px" width="16" height="13" viewBox="0 0 16 13" >
<rect x="0.5" y="0.5" width="15" height="12" fill="#000" stroke="#a0a0a0"/>
<rect x="1" y="1" width="14" height="2" fill="#c8c8c8"/>
<path d="M5 5h-2v4h2M6.5 5.5v.8M6.5 8v.8M8 5l2 4M11 9h2.5" fill="none" stroke="#fff" stroke-width="1.1"/></svg>
<svg class="a" style="left:377px;top:745px" width="17" height="16" viewBox="0 0 17 16" >
<path d="M0.5 1.5h9l2 2v12h-11z" fill="#fff" stroke="#707070"/>
<path d="M2 1v2M4 1v2M6 1v2M8 1v2" stroke="#606060"/>
<rect x="2" y="8" width="8" height="6" fill="#50b020"/><rect x="2" y="8" width="8" height="2.5" fill="#d8e890"/>
<path d="M6 13l7-10" stroke="#f0a020" stroke-width="2.2"/><path d="M13 3l1.5-2" stroke="#c01010" stroke-width="2"/></svg>
<svg class="a" style="left:1132px;top:745px" width="16" height="16" viewBox="0 0 16 16" >
<rect x="0.5" y="0.5" width="15" height="15" fill="#f8d8d8" stroke="#c08080"/>
<path d="M3 3l5 10 5-10" fill="none" stroke="#d02020" stroke-width="2.4"/></svg>
<svg class="a" style="left:1158px;top:746px" width="12" height="13" viewBox="0 0 12 13" >
<rect x="0" y="0" width="12" height="13" fill="#fff"/><rect x="0" y="0" width="11" height="12" fill="#58b8f8"/>
<rect x="0" y="0" width="11" height="3" fill="#7090a0"/><rect x="0" y="0" width="1" height="12" fill="#708090"/></svg>
<svg class="a" style="left:1180px;top:745px" width="16" height="16" viewBox="0 0 16 16" >
<path d="M0.5 5.5h3l5-5v15l-5-5h-3z" fill="#fff" stroke="#2c4450"/>
<circle cx="11" cy="11" r="4.5" fill="#e02020"/><path d="M9 9l4 4M13 9l-4 4" stroke="#fff" stroke-width="1.5"/></svg>
<svg class="a" style="left:1204px;top:745px" width="16" height="15" viewBox="0 0 16 15" >
<rect x="1" y="1" width="4" height="5" rx="1.5" fill="none" stroke="#fff" stroke-width="1.5"/>
<path d="M3 6v9" stroke="#fff" stroke-width="1.5"/>
<rect x="6" y="3" width="9" height="7" fill="none" stroke="#fff" stroke-width="1.5"/>
<path d="M10.5 10v3M7 14h7" stroke="#fff" stroke-width="1.5"/></svg>
<div class="a" style="left:1258px;top:745px;font-size:12px;line-height:18px;color:#000;transform:scaleX(0.88);transform-origin:0 0">ENG</div>
<div class="a" style="left:1301px;top:745px;font-size:12px;line-height:18px;color:#000">7:34 AM</div>
</body></html>
